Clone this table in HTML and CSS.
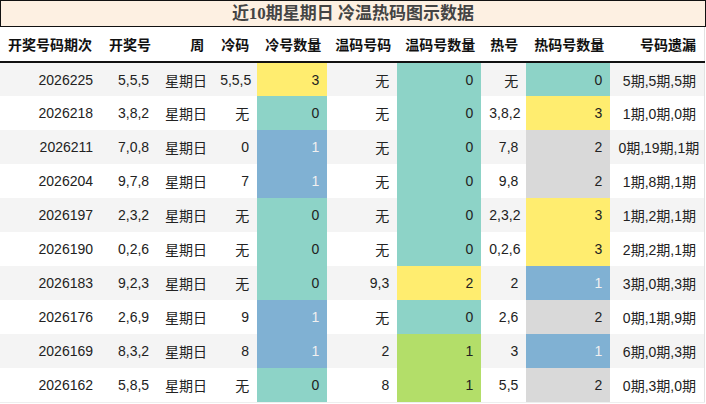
FILE: index.html
```html
<!DOCTYPE html>
<html lang="zh">
<head>
<meta charset="utf-8">
<title>近10期星期日 冷温热码图示数据</title>
<link rel="stylesheet" href="styles.css">
</head>
<body>
<div class="wrap">
  <div class="title">近10期星期日 冷温热码图示数据</div>
  <table class="data">
    <colgroup>
      <col class="c1"><col class="c2"><col class="c3"><col class="c4"><col class="c5">
      <col class="c6"><col class="c7"><col class="c8"><col class="c9"><col class="c10">
    </colgroup>
    <thead>
      <tr>
        <th>开奖号码期次</th><th>开奖号</th><th>周</th><th>冷码</th><th>冷号数量</th>
        <th>温码号码</th><th>温码号数量</th><th>热号</th><th>热码号数量</th><th>号码遗漏</th>
      </tr>
    </thead>
    <tbody>
      <tr><td>2026225</td><td>5,5,5</td><td>星期日</td><td>5,5,5</td><td class="yellow">3</td><td>无</td><td class="teal">0</td><td>无</td><td class="teal">0</td><td>5期,5期,5期</td></tr>
      <tr><td>2026218</td><td>3,8,2</td><td>星期日</td><td>无</td><td class="teal">0</td><td>无</td><td class="teal">0</td><td>3,8,2</td><td class="yellow">3</td><td>1期,0期,0期</td></tr>
      <tr><td>2026211</td><td>7,0,8</td><td>星期日</td><td>0</td><td class="blue">1</td><td>无</td><td class="teal">0</td><td>7,8</td><td class="gray">2</td><td>0期,19期,1期</td></tr>
      <tr><td>2026204</td><td>9,7,8</td><td>星期日</td><td>7</td><td class="blue">1</td><td>无</td><td class="teal">0</td><td>9,8</td><td class="gray">2</td><td>1期,8期,1期</td></tr>
      <tr><td>2026197</td><td>2,3,2</td><td>星期日</td><td>无</td><td class="teal">0</td><td>无</td><td class="teal">0</td><td>2,3,2</td><td class="yellow">3</td><td>1期,2期,1期</td></tr>
      <tr><td>2026190</td><td>0,2,6</td><td>星期日</td><td>无</td><td class="teal">0</td><td>无</td><td class="teal">0</td><td>0,2,6</td><td class="yellow">3</td><td>2期,2期,1期</td></tr>
      <tr><td>2026183</td><td>9,2,3</td><td>星期日</td><td>无</td><td class="teal">0</td><td>9,3</td><td class="yellow">2</td><td>2</td><td class="blue">1</td><td>3期,0期,3期</td></tr>
      <tr><td>2026176</td><td>2,6,9</td><td>星期日</td><td>9</td><td class="blue">1</td><td>无</td><td class="teal">0</td><td>2,6</td><td class="gray">2</td><td>0期,1期,9期</td></tr>
      <tr><td>2026169</td><td>8,3,2</td><td>星期日</td><td>8</td><td class="blue">1</td><td>2</td><td class="green">1</td><td>3</td><td class="blue">1</td><td>6期,0期,3期</td></tr>
      <tr><td>2026162</td><td>5,8,5</td><td>星期日</td><td>无</td><td class="teal">0</td><td>8</td><td class="green">1</td><td>5,5</td><td class="gray">2</td><td>0期,3期,0期</td></tr>
    </tbody>
  </table>
</div>
</body>
</html>
```
FILE: styles.css
```css
html, body {
  margin: 0;
  padding: 0;
  background: #fff;
}

.wrap {
  width: 706px;
  font-family: "Liberation Sans", "Noto Sans CJK SC", sans-serif;
  font-size: 14px;
  color: #222;
}

.title {
  box-sizing: border-box;
  height: 27px;
  border: 1px solid #111;
  background: #fdf0e2;
  color: #444;
  font-family: "Liberation Serif", "Noto Sans CJK SC", serif;
  font-weight: bold;
  font-size: 17px;
  line-height: 25px;
  text-align: center;
}

.data {
  width: 705px;
  table-layout: fixed;
  border-collapse: collapse;
  border-right: 1px solid #e2e2e2;
  border-bottom: 1px solid #eeeeee;
}

.c1 { width: 101px; }
.c2 { width: 56px; }
.c3 { width: 55px; }
.c4 { width: 45px; }
.c5 { width: 70px; }
.c6 { width: 70px; }
.c7 { width: 84px; }
.c8 { width: 45px; }
.c9 { width: 84px; }
.c10 { width: 94px; }

.data th {
  height: 34px;
  padding: 0 8px;
  text-align: right;
  font-weight: bold;
  color: #111;
  white-space: nowrap;
  border-bottom: 2px solid #111;
}

.data th:first-child {
  text-align: left;
}

.data td {
  box-sizing: border-box;
  height: 34px;
  padding: 0 8px;
  text-align: right;
  white-space: nowrap;
}

.data tbody tr:nth-child(odd) {
  background: #f4f4f4;
}

.data td.teal { background: #8dd3c7; }
.data td.blue { background: #80b1d3; color: #f0f0f0; }
.data td.yellow { background: #ffed6f; }
.data td.gray { background: #d9d9d9; }
.data td.green { background: #b3de69; }
```
